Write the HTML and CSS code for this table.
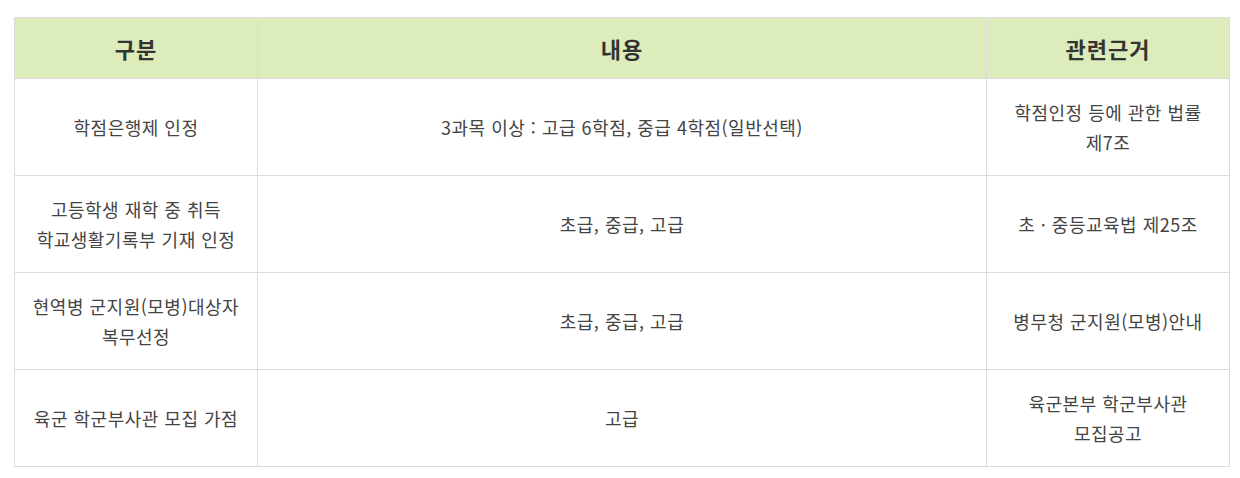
FILE: index.html
```html
<!DOCTYPE html>
<html lang="ko">
<head>
<meta charset="utf-8">
<link rel="stylesheet" href="styles.css">
</head>
<body>
<div class="wrap">
  <table class="tbl">
    <colgroup>
      <col class="c1"><col class="c2"><col class="c3">
    </colgroup>
    <thead>
      <tr><th>구분</th><th>내용</th><th>관련근거</th></tr>
    </thead>
    <tbody>
      <tr>
        <td>학점은행제 인정</td>
        <td>3과목 이상 : 고급 6학점, 중급 4학점(일반선택)</td>
        <td>학점인정 등에 관한 법률<br>제7조</td>
      </tr>
      <tr>
        <td>고등학생 재학 중 취득<br>학교생활기록부 기재 인정</td>
        <td>초급, 중급, 고급</td>
        <td>초 · 중등교육법 제25조</td>
      </tr>
      <tr>
        <td>현역병 군지원(모병)대상자<br>복무선정</td>
        <td>초급, 중급, 고급</td>
        <td>병무청 군지원(모병)안내</td>
      </tr>
      <tr>
        <td>육군 학군부사관 모집 가점</td>
        <td>고급</td>
        <td>육군본부 학군부사관<br>모집공고</td>
      </tr>
    </tbody>
  </table>
</div>
</body>
</html>
```

FILE: styles.css
```css
html, body {
  margin: 0;
  padding: 0;
  background: #fff;
}
.wrap {
  padding: 17px 10px 0 14px;
}
.tbl {
  width: 1216px;
  border-collapse: collapse;
  table-layout: fixed;
  font-family: "Noto Sans CJK KR", "Noto Sans", sans-serif;
}
.c1 { width: 20%; }
.c2 { width: 60%; }
.c3 { width: 20%; }
.tbl th, .tbl td {
  border: 1px solid #dcdcdc;
  text-align: center;
  vertical-align: middle;
  padding: 0 4px;
}
.tbl th {
  background: #dcecba;
  color: #333;
  font-size: 22px;
  font-weight: 700;
  letter-spacing: 1px;
  height: 60px;
}
.tbl td {
  color: #444;
  font-size: 18px;
  letter-spacing: 0.5px;
  line-height: 30px;
  height: 96px;
}
```
